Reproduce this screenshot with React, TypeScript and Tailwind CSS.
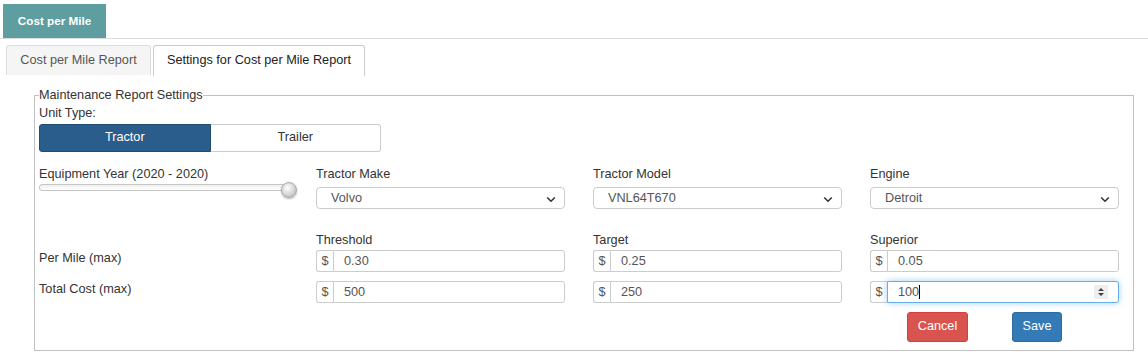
import React from "react";

function Chevron() {
  return (
    <svg width="10" height="7" viewBox="0 0 10 7" className="absolute right-[8px] top-[8px]">
      <path d="M1.2 1.5 L5 5.2 L8.8 1.5" fill="none" stroke="#333" strokeWidth="1.6" />
    </svg>
  );
}

function Select({ value }: { value: string }) {
  return (
    <div className="relative h-[22px] border border-[#ccc] rounded-[4px] bg-white text-[12.7px] text-[#555] pl-[14px] leading-[20px]">
      {value}
      <Chevron />
    </div>
  );
}

function MoneyInput({ value, focused }: { value: string; focused?: boolean }) {
  return (
    <div className="flex h-[22px] text-[12.7px] leading-[20px]">
      <div className="w-[17px] border border-[#ccc] border-r-0 rounded-l-[3px] text-[#555] text-center bg-white">$</div>
      {focused ? (
        <div className="relative flex-1 border border-[#66afe9] rounded-r-[3px] pl-[10px] text-[#555] shadow-[0_0_6px_rgba(102,175,233,0.6)] bg-white">
          100<span className="inline-block w-px h-[14px] bg-black align-middle -mt-[2px]" />
          <div className="absolute right-[10px] top-[3px] w-[14px] h-[14px] bg-[#eee] flex flex-col items-center justify-center gap-[1px]">
            <svg width="6" height="10" viewBox="0 0 6 10">
              <path d="M0 4 L3 1 L6 4 Z M0 6 L3 9 L6 6 Z" fill="#444" />
            </svg>
          </div>
        </div>
      ) : (
        <div className="flex-1 border border-[#ccc] rounded-r-[3px] pl-[10px] text-[#555] bg-white">{value}</div>
      )}
    </div>
  );
}

export default function App() {
  return (
    <div className="w-[1148px] h-[355px] bg-white text-[#333] overflow-hidden" style={{ fontFamily: '"Liberation Sans", Arial, sans-serif' }}>
      <div className="pt-[4px] pl-[3px] border-b border-[#ddd]">
        <div className="w-[103px] h-[34px] bg-[#5f9ea0] text-white text-[11.7px] font-bold flex items-center justify-center">
          Cost per Mile
        </div>
      </div>
      <div className="flex pl-[6px] pt-[6px] gap-[2px] text-[12.7px]">
        <div className="w-[145px] h-[30px] bg-[#f5f5f5] border border-b-0 border-[#ddd] rounded-t-[3px] flex items-center justify-center text-[#555]">
          Cost per Mile Report
        </div>
        <div className="w-[212px] h-[31px] bg-white border border-b-0 border-[#ccc] rounded-t-[3px] flex items-center justify-center text-[#222]">
          Settings for Cost per Mile Report
        </div>
      </div>
      <fieldset className="ml-[34px] mt-[12px] w-[1100px] h-[263px] border border-[#c0c0c0] px-[4px] text-[12.7px]">
        <legend className="px-0 leading-[15px]">Maintenance Report Settings</legend>
        <div className="leading-[16px] mt-[2px]">Unit Type:</div>
        <div className="flex mt-[3px] w-[342px] h-[28px]">
          <div className="flex-1 bg-[#2b5d8c] border border-[#204d74] rounded-l-[3px] text-white flex items-center justify-center">Tractor</div>
          <div className="flex-1 bg-white border border-l-0 border-[#ccc] rounded-r-[3px] flex items-center justify-center text-[#333]">Trailer</div>
        </div>
        <div className="grid grid-cols-[249px_249px_249px_249px] gap-x-[28px] mt-[15px]">
          <div>
            <div className="leading-[15px]">Equipment Year (2020 - 2020)</div>
            <div className="relative mt-[2px] h-[7px] w-[251px] border border-[#c5c5c5] rounded-[3px] bg-gradient-to-b from-[#f0f0f0] to-white">
              <div className="absolute right-[-8px] top-[-3px] w-[16px] h-[16px] rounded-full border border-[#aaa] bg-[radial-gradient(circle_at_40%_35%,#ffffff,#d4d4d4_55%,#a8a8a8)] shadow-[0_1px_2px_rgba(0,0,0,0.3)]" />
            </div>
          </div>
          <div>
            <div className="leading-[15px]">Tractor Make</div>
            <div className="mt-[5px]"><Select value="Volvo" /></div>
          </div>
          <div>
            <div className="leading-[15px]">Tractor Model</div>
            <div className="mt-[5px]"><Select value="VNL64T670" /></div>
          </div>
          <div>
            <div className="leading-[15px]">Engine</div>
            <div className="mt-[5px]"><Select value="Detroit" /></div>
          </div>
        </div>
        <div className="grid grid-cols-[249px_249px_249px_249px] gap-x-[28px] mt-[24px]">
          <div className="pt-[17px]">
            <div className="h-[22px] leading-[16px]">Per Mile (max)</div>
            <div className="h-[22px] leading-[16px] mt-[9px]">Total Cost (max)</div>
          </div>
          <div>
            <div className="leading-[15px] mb-[2px]">Threshold</div>
            <MoneyInput value="0.30" />
            <div className="mt-[9px]"><MoneyInput value="500" /></div>
          </div>
          <div>
            <div className="leading-[15px] mb-[2px]">Target</div>
            <MoneyInput value="0.25" />
            <div className="mt-[9px]"><MoneyInput value="250" /></div>
          </div>
          <div>
            <div className="leading-[15px] mb-[2px]">Superior</div>
            <MoneyInput value="0.05" />
            <div className="mt-[9px]"><MoneyInput value="100" focused /></div>
            <div className="flex mt-[9px] pl-[37px] gap-[44px]">
              <div className="w-[61px] h-[30px] bg-[#d9534f] border border-[#d43f3a] rounded-[3px] text-white flex items-center justify-center">Cancel</div>
              <div className="w-[50px] h-[30px] bg-[#337ab7] border border-[#2e6da4] rounded-[3px] text-white flex items-center justify-center">Save</div>
            </div>
          </div>
        </div>
      </fieldset>
    </div>
  );
}
